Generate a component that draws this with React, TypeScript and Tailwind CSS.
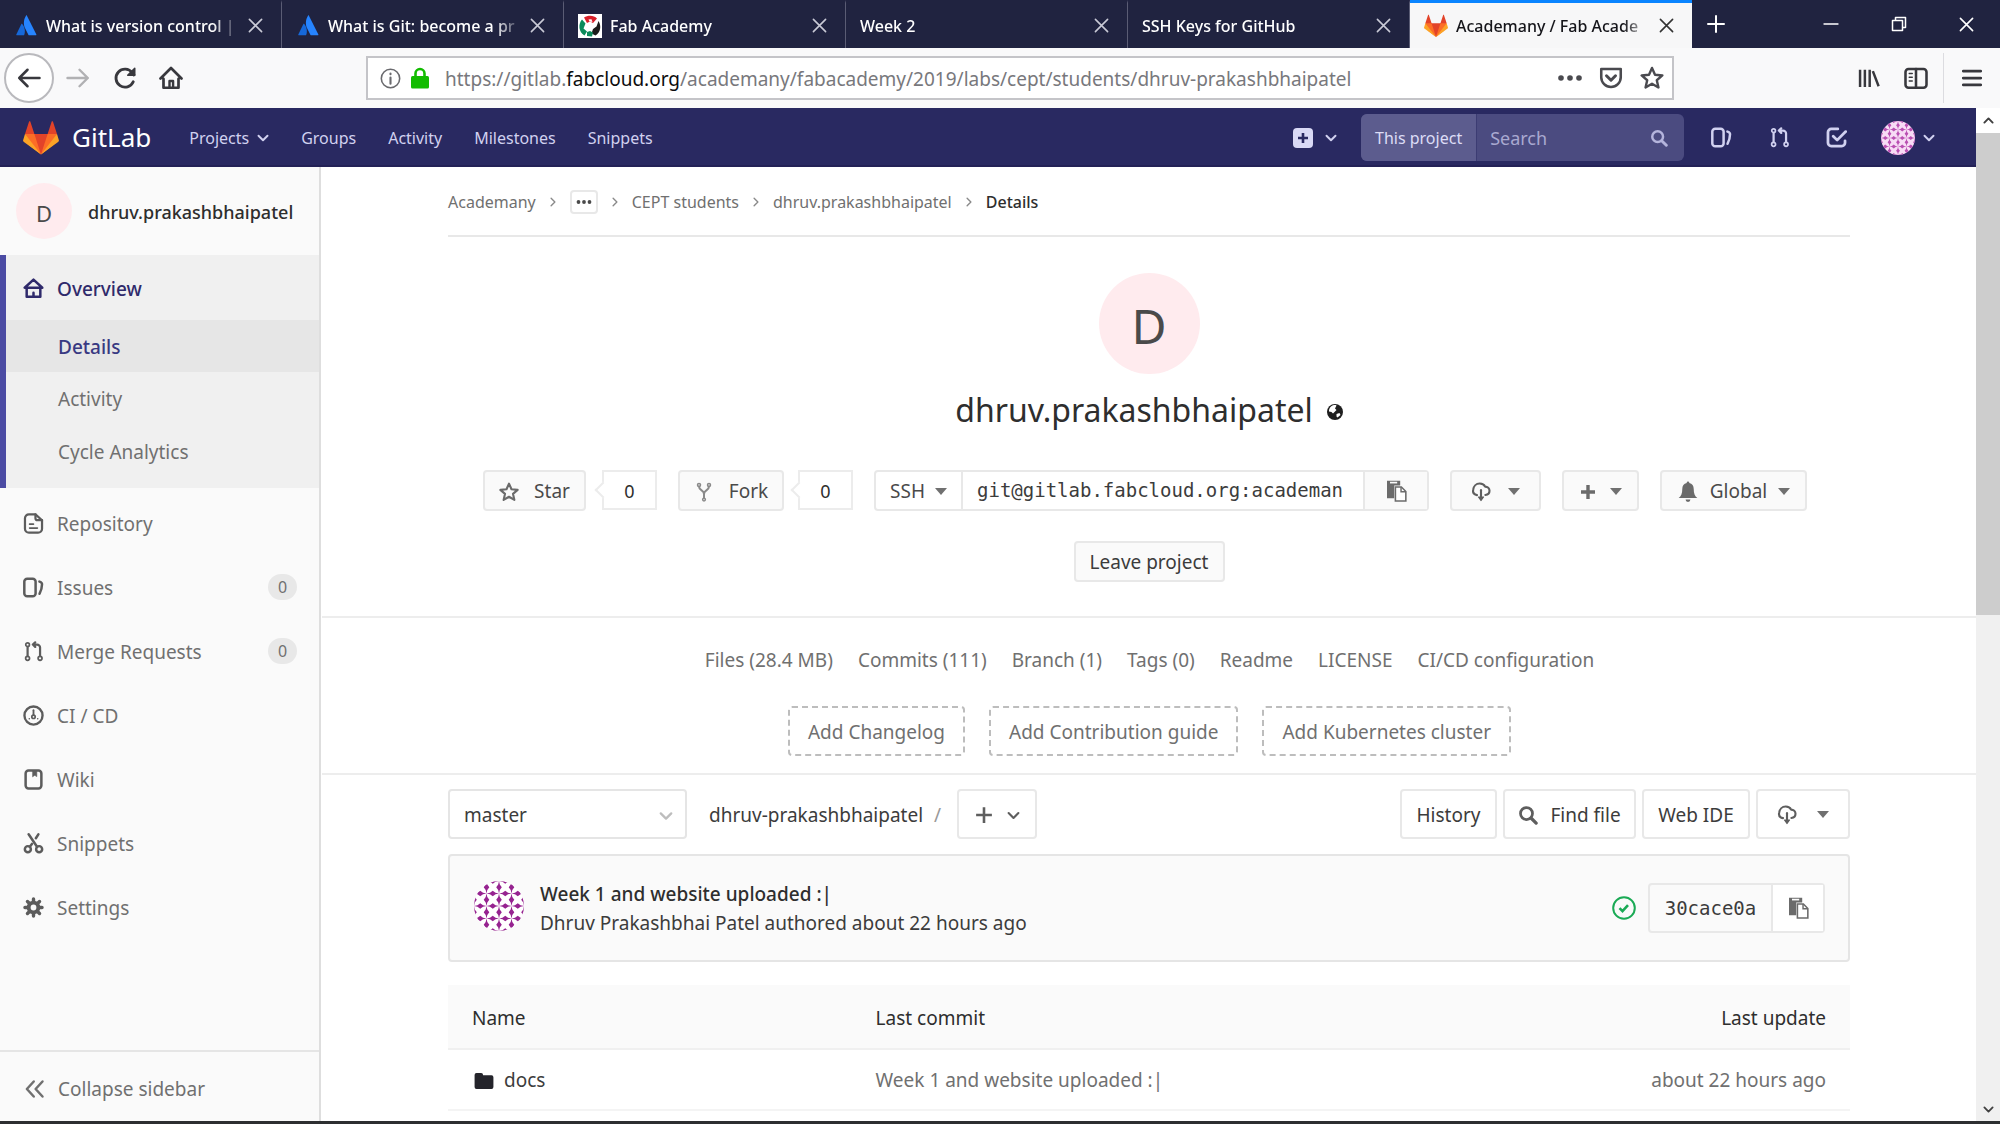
import React, { ReactNode } from "react";

/* ---------- icon base ---------- */

type IconProps = { className?: string };

function Stroke({ className = "size-5", width = 2, children }: IconProps & { width?: number; children: ReactNode }) {
  return (
    <svg viewBox="0 0 16 16" className={"shrink-0 " + className} fill="none" stroke="currentColor" strokeWidth={width} strokeLinecap="round" strokeLinejoin="round" aria-hidden="true">
      {children}
    </svg>
  );
}

/* ---------- logos ---------- */

const Tanuki = ({ className = "size-9" }: IconProps) => (
  <svg viewBox="0 0 36 36" className={"shrink-0 " + className} aria-hidden="true">
    <path d="M2 14l9.38 9v-9l-4-12.28c-.205-.632-1.176-.632-1.38 0z" fill="#e24329" />
    <path d="M34 14l-9.38 9v-9l4-12.28c.205-.632 1.176-.632 1.38 0z" fill="#e24329" />
    <path d="M18 34.38L3 14h30z" fill="#e24329" />
    <path d="M18 34.38L11.38 14H2l4 11z" fill="#fc6d26" />
    <path d="M18 34.38L24.62 14H34l-4 11z" fill="#fc6d26" />
    <path d="M2 14L.1 20.16c-.18.565 0 1.2.5 1.56l17.42 12.66z" fill="#fca326" />
    <path d="M34 14l1.9 6.16c.18.565 0 1.2-.5 1.56L18 34.38z" fill="#fca326" />
  </svg>
);

const Atlassian = () => (
  <svg viewBox="0 0 20 20" className="size-[21px] shrink-0" aria-hidden="true">
    <path d="M6 8.6C5.700 8.200 5.200 8.300 5 8.700L.3 18.500c-.2.400.1.800.5.800h6.500c.2 0 .4-.1.500-.3C9.200 16 8.400 11.400 6 8.600z" fill="#1668d9" />
    <path d="M9.500.6c-2.600 4.200-2.400 8.800-.7 12.200l3.100 6.200c.1.200.3.300.5.300h6.500c.4 0 .7-.4.500-.8L10.400.6c-.2-.4-.7-.4-.9 0z" fill="#2684ff" />
  </svg>
);

const FabLogo = () => (
  <svg viewBox="0 0 24 24" className="size-6 shrink-0" aria-hidden="true">
    <rect width="24" height="24" fill="#fff" />
    <path d="M6 3.500C10 .8 16 1 19 4.500l-4 4.500-3-1.500-3 1.500z" fill="#d81f2a" />
    <path d="M10.500 5.500l3-.3 1 2.800-3-.5z" fill="#fff" />
    <path d="M4 5.500C0 10 .5 18 6.500 21.500l2.500-4-3.500-3 2-5z" fill="#0c8a5b" />
    <path d="M20.500 7c3.200 5 2 11.500-3 14.500l-4-2 1.500-4.500 3.500-2.500z" fill="#1b1b1b" />
    <path d="M9 10l3-1.500L15.500 10v3.500L12 15.500 9 13.500z" fill="#fff" />
    <path d="M9 18l3-1 3 1.500-1 4-5-.5z" fill="#0c8a5b" />
  </svg>
);

const NODES = [-12.5, 0, 12.5, 25, 37.5, 50];

function Identicon({ id, petal, ground, className }: { id: string; petal: string; ground: string; className: string }) {
  return (
    <svg viewBox="0 0 50 50" className={"shrink-0 " + className} role="img" aria-label="Dhruv Prakashbhai Patel">
      <clipPath id={id}>
        <circle cx="25" cy="25" r="25" />
      </clipPath>
      <g clipPath={"url(#" + id + ")"}>
        <rect width="50" height="50" fill={ground} />
        {NODES.flatMap((x) =>
          NODES.map((y) => (
            <path key={x + "," + y} fill={petal} d={`M${x} ${y}l3.500 -.8l2.750 -2l2.750 2l3.500 .8l-3.500 .8l-2.750 2l-2.750 -2zM${x} ${y}l-.8 3.500l-2 2.750l2 2.750l.8 3.500l.8 -3.500l2 -2.750l-2 -2.750z`} />
          ))
        )}
      </g>
    </svg>
  );
}

/* ---------- page icons ---------- */

const HomeIcon = (p: IconProps) => (
  <Stroke {...p} width={1.900}>
    <path d="M8 1.200L1.300 7.400h13.400z" />
    <path d="M2.800 7.800V14.200h10.400V7.800M8 11.300V14" />
  </Stroke>
);
const DocIcon = (p: IconProps) => (
  <Stroke {...p} width={1.700}>
    <path d="M9.500 1H4.500a3 3 0 0 0-3 3v8a3 3 0 0 0 3 3h7a3 3 0 0 0 3-3V5.500z" />
    <path d="M9.500 1v3a1.500 1.500 0 0 0 1.500 1.500h3.500" />
    <path d="M5 8.500h3M5 11.500h6" strokeWidth={1.200} />
  </Stroke>
);
const IssuesIcon = (p: IconProps) => (
  <Stroke {...p} width={1.900}>
    <rect x="1" y="1.300" width="8.600" height="13.400" rx="2.200" />
    <path d="M12.500 3.500c1.300.3 2 .9 2 2 0 2.300-.8 5-1.900 7.300" />
  </Stroke>
);
const MergeIcon = (p: IconProps) => (
  <Stroke {...p} width={1.700}>
    <circle cx="3.500" cy="2.800" r="1.400" strokeWidth={1.300} />
    <circle cx="3.500" cy="13.200" r="1.500" strokeWidth={1.300} />
    <circle cx="13" cy="13.200" r="1.500" strokeWidth={1.300} />
    <path d="M3.500 4.500v7M13 11.500V5a2.300 2.300 0 0 0-2.300-2.300H7.500M9.300 1L7.500 2.700l1.800 1.800" />
  </Stroke>
);
const GaugeIcon = (p: IconProps) => (
  <Stroke {...p} width={1.800}>
    <circle cx="8" cy="8" r="6.900" />
    <circle cx="8" cy="9" r="1.300" strokeWidth={1.300} />
    <path d="M8 4v3.500" strokeWidth={1.400} />
    <path d="M4.800 10.500h.01M11.200 10.500h.01" strokeWidth={1.200} />
  </Stroke>
);
const BookIcon = (p: IconProps) => (
  <Stroke {...p} width={1.900}>
    <rect x="2" y="1.200" width="12" height="13.600" rx="2.200" />
    <path d="M7.500 1.500h3v4.300L9 4.800l-1.500 1z" fill="currentColor" strokeWidth={0.500} />
  </Stroke>
);
const ScissorsIcon = (p: IconProps) => (
  <Stroke {...p} width={1.900}>
    <circle cx="3.700" cy="12.300" r="2.300" />
    <circle cx="12.300" cy="12.300" r="2.300" />
    <path d="M4.300 1l6.400 9.500M11.700 1L9.800 4M5.200 10.500l1.600-2.200" />
  </Stroke>
);
const GearIcon = (p: IconProps) => (
  <Stroke {...p} width={3}>
    <circle cx="8" cy="8" r="3.700" />
    <path strokeWidth={2.600} d="M8 1.500v2M8 12.500v2M1.500 8h2M12.500 8h2M3.400 3.400l1.400 1.400M11.200 11.200l1.400 1.400M3.400 12.600l1.400-1.400M11.200 4.800l1.400-1.400" />
  </Stroke>
);
const CollapseIcon = (p: IconProps) => (
  <Stroke {...p}>
    <path d="M7 2L1.500 8 7 14M14 2L8.500 8l5.500 6" />
  </Stroke>
);
const TodoIcon = (p: IconProps) => (
  <Stroke {...p} width={2.100}>
    <path d="M9 1.500H4A2.500 2.500 0 0 0 1.500 4v8A2.500 2.500 0 0 0 4 14.500h8a2.500 2.500 0 0 0 2.500-2.500v-1.500" />
    <path d="M5.500 7L8.500 10 15 3.500" />
  </Stroke>
);
const ChevronDown = ({ className = "size-3" }: IconProps) => (
  <Stroke className={className} width={2.600}>
    <path d="M2 5l6 6 6-6" />
  </Stroke>
);
const Caret = () => (
  <svg viewBox="0 0 12 8" className="h-2 w-3 shrink-0 text-[#707070]" aria-hidden="true">
    <path d="M0 0h12L6 7z" fill="currentColor" />
  </svg>
);
const SearchIcon = ({ className = "size-5" }: IconProps) => (
  <Stroke className={className} width={2.200}>
    <circle cx="6.800" cy="6.800" r="4.800" />
    <path d="M10.600 10.600L14.500 14.500" strokeWidth={2.600} />
  </Stroke>
);
const StarIcon = ({ className = "size-5", width = 1.700 }: IconProps & { width?: number }) => (
  <Stroke className={className} width={width}>
    <path d="M8 1.300l2 4.500 4.900.5-3.700 3.200 1.100 4.800L8 11.800l-4.300 2.500 1.100-4.800L1.100 6.300 6 5.800z" />
  </Stroke>
);
const ForkIcon = () => (
  <Stroke className="size-5 text-[#8a8a8a]" width={1.600}>
    <circle cx="4" cy="2.300" r="1.200" strokeWidth={1.200} />
    <circle cx="12" cy="2.300" r="1.200" strokeWidth={1.200} />
    <circle cx="8" cy="14" r="1.100" strokeWidth={1.200} />
    <path d="M4 3.600C4 7 8 6.500 8 9.500v3.200M12 3.600C12 7 8 6.500 8 9.500" />
  </Stroke>
);
const PasteIcon = () => (
  <svg viewBox="0 0 20 20" className="size-6 shrink-0 text-[#6b6b6b]" aria-hidden="true">
    <path d="M2.500 1.500h11v4H8.500V16h-6z" fill="currentColor" />
    <path d="M5 2.300h6v1.400H5z" fill="#fafafa" />
    <path d="M9.500 6.700h5l3.700 3.700v8h-8.700z" fill="#fff" stroke="currentColor" strokeWidth="1.300" />
    <path d="M14.200 6.700v4h4" fill="none" stroke="currentColor" strokeWidth="1.200" />
  </svg>
);
const DownloadIcon = () => (
  <Stroke className="size-5 text-[#5e5e5e]" width={1.700}>
    <path d="M4.800 10.500C2.500 10 1.300 8.300 1.700 6.300 2 3.500 4 1.200 7 1.200c2.300 0 3.600 1 4.300 2.500 2 0 3.500 1.500 3.500 3.300 0 1.900-1.300 3.200-3.300 3.400" />
    <path d="M8 6.500v6.500" />
    <path d="M6 12l2 2.800 2-2.800z" fill="currentColor" strokeWidth={1} />
  </Stroke>
);
const PlusIcon = ({ className = "size-5", width = 2.400 }: IconProps & { width?: number }) => (
  <Stroke className={className} width={width}>
    <path d="M8 1v14M1 8h14" strokeLinecap="butt" />
  </Stroke>
);
const BellIcon = () => (
  <svg viewBox="0 0 20 20" className="size-[22px] shrink-0 text-[#6b6b6b]" aria-hidden="true">
    <path d="M10 0.500c.7 0 1.200.5 1.200 1.300 2.600.6 4 2.600 4 5.400 0 4 1 6.300 3.300 8.300H1.500c2.300-2 3.300-4.300 3.300-8.300 0-2.800 1.400-4.800 4-5.400C8.800 1 9.300.5 10 .5zM7.800 16.800h4.400a2.200 2.200 0 0 1-4.400 0z" fill="currentColor" />
  </svg>
);
const GlobeIcon = () => (
  <svg viewBox="0 0 16 16" className="mt-1 size-4 shrink-0" aria-label="Public" role="img">
    <circle cx="8" cy="8" r="8" fill="#1f1f1f" />
    <path d="M4 2.500C6 1 8.500.8 9.500 1.500L8 4.500 9.500 6 6 9.500 4.500 8 2 7.500C1.800 5.500 2.600 3.600 4 2.500zM9.500 10l3-1 1 2L10.500 13.500 9.500 12.500z" fill="#fff" />
  </svg>
);
const FolderIcon = () => (
  <svg viewBox="0 0 20 17" className="h-4 w-5 shrink-0" aria-hidden="true">
    <path d="M2 0h5a2 2 0 0 1 2 2v.5h9a2 2 0 0 1 2 2V15a2 2 0 0 1-2 2H2a2 2 0 0 1-2-2V2a2 2 0 0 1 2-2z" fill="#24242b" />
  </svg>
);
const CloseIcon = ({ className = "size-4" }: IconProps) => (
  <Stroke className={className} width={1.700}>
    <path d="M1.500 1.500l13 13M14.500 1.500l-13 13" />
  </Stroke>
);

/* ---------- browser chrome ---------- */

const TABS: { title: string; icon?: ReactNode; active?: boolean }[] = [
  { title: "What is version control |", icon: <Atlassian /> },
  { title: "What is Git: become a pr", icon: <Atlassian /> },
  { title: "Fab Academy", icon: <FabLogo /> },
  { title: "Week 2" },
  { title: "SSH Keys for GitHub" },
  { title: "Academany / Fab Acade", icon: <Tanuki className="size-6" />, active: true },
];

function TabBar() {
  return (
    <div className="flex h-12 shrink-0 bg-[#202340] text-white">
      {TABS.map((t) => (
        <div
          key={t.title}
          className={
            "flex min-w-0 basis-[282px] items-center border-t-[3px] pl-[14px] pr-[18px] " +
            (t.active ? "border-t-[#0a84ff] bg-[#f7f7f8] text-[#15151a]" : "border-r border-r-[#5a5c74] border-t-[#202340]")
          }
        >
          {t.icon && <span className="mr-2 flex w-6 justify-center">{t.icon}</span>}
          <a href="#tab" className="min-w-0 flex-1 whitespace-nowrap text-base font-medium [mask-image:linear-gradient(to_right,black_86%,transparent)]">
            {t.title}
          </a>
          <button aria-label="Close tab" className={"ml-2 " + (t.active ? "text-[#333]" : "text-[#c9cad6]")}>
            <CloseIcon className="size-[15px]" />
          </button>
        </div>
      ))}
      <button aria-label="New tab" className="flex w-12 items-center justify-center pb-px">
        <PlusIcon width={1.600} />
      </button>
      <div className="flex-1" />
      <div className="flex w-[202px] items-center justify-between pl-[25px] pr-[26px]">
        <button aria-label="Minimize">
          <Stroke className="size-4" width={1.300}><path d="M1 8h14" /></Stroke>
        </button>
        <button aria-label="Restore">
          <Stroke className="size-4" width={1.500}><path d="M1.500 4.500h10v10h-10zM4.500 4.500v-3h10v10h-3" /></Stroke>
        </button>
        <button aria-label="Close window">
          <CloseIcon className="size-[15px]" />
        </button>
      </div>
    </div>
  );
}

function Toolbar() {
  return (
    <div className="flex h-[60px] shrink-0 items-center bg-[#f9f9fa] pl-1 text-[#38383d]">
      <button aria-label="Back" className="flex size-[50px] items-center justify-center rounded-full border-2 border-[#b9b9bd] bg-white">
        <Stroke className="size-6" width={1.700}><path d="M15 8H1.500M7 2.500L1.500 8 7 13.500" /></Stroke>
      </button>
      <button aria-label="Forward" className="ml-3 text-[#b1b1b3]">
        <Stroke className="size-6" width={1.600}><path d="M1 8h13.500M9 2.500L14.500 8 9 13.500" /></Stroke>
      </button>
      <button aria-label="Reload" className="ml-[23px]">
        <Stroke className="size-6" width={1.900}><path d="M13.500 10.500A6 6 0 1 1 12.800 4.500L14 6" /><path d="M14.500 1.500V6.200H9.800z" fill="currentColor" strokeWidth={1} /></Stroke>
      </button>
      <button aria-label="Home" className="ml-[22px]">
        <Stroke className="size-6" width={1.800}><path d="M1 8.300L8 1.300l7 7M3 8.500V14.500h10V8.500" /><path d="M7 14v-4h2.400v4" strokeWidth={1.600} /></Stroke>
      </button>
      <div className="ml-[183px] flex h-[44px] flex-1 items-center border-2 border-[#c4c4c8] bg-white pl-3 pr-2">
        <Stroke className="size-[21px] text-[#6a6a6e]" width={1.200}><circle cx="8" cy="8" r="7" /><path d="M8 7.300V12M8 4.200v.6" strokeWidth={1.600} /></Stroke>
        <svg viewBox="0 0 18 22" className="ml-[10px] h-[22px] w-[18px] shrink-0" aria-label="Secure" role="img">
          <path d="M4.500 10V6.500a4.500 4.500 0 0 1 9 0V10" fill="none" stroke="#12bc00" strokeWidth="2.600" />
          <rect y="9" width="18" height="12.500" rx="1.500" fill="#12bc00" />
        </svg>
        <div role="textbox" aria-label="Address" tabIndex={0} className="ml-4 flex-1 whitespace-nowrap pt-[2px] text-[19px] leading-6 text-[#78787c]">
          https://gitlab.<span className="text-[#0c0c0d]">fabcloud.org</span>/academany/fabacademy/2019/labs/cept/students/dhruv-prakashbhaipatel
        </div>
        <button aria-label="Page actions">
          <svg viewBox="0 0 24 6" className="h-[6px] w-6" fill="#4a4a4f" aria-hidden="true"><circle cx="3" cy="3" r="2.800" /><circle cx="12" cy="3" r="2.800" /><circle cx="21" cy="3" r="2.800" /></svg>
        </button>
        <button aria-label="Save to Pocket" className="ml-[17px] text-[#4a4a4f]">
          <Stroke className="size-6" width={1.700}><path d="M1.500 2h13v5.500a6.500 6.500 0 0 1-13 0z" /><path d="M5 6.500l3 3 3-3" strokeWidth={2} /></Stroke>
        </button>
        <button aria-label="Bookmark" className="ml-[17px] text-[#4a4a4f]">
          <StarIcon className="size-6" width={1.600} />
        </button>
      </div>
      <button aria-label="Library" className="ml-[184px]">
        <Stroke className="size-[22px]" width={1.800}><path d="M1.500 2v12.500M5 2v12.500M8.500 2v12.500M10.800 3L15 14" strokeLinecap="butt" /></Stroke>
      </button>
      <button aria-label="Sidebars" className="ml-6">
        <Stroke className="size-6" width={1.700}><rect x="1" y="2" width="14" height="12.500" rx="2" /><path d="M8 2v12.500" /><path d="M3.500 5h2M3.500 7.500h2M3.500 10h2" strokeWidth={1} /></Stroke>
      </button>
      <div className="ml-[15px] h-[50px] w-px bg-[#dcdce0]" />
      <button aria-label="Menu" className="mx-[18px]">
        <Stroke className="size-5" width={2.200}><path d="M1 2.500h14M1 8h14M1 13.500h14" /></Stroke>
      </button>
    </div>
  );
}

/* ---------- GitLab navigation ---------- */

function NavBar() {
  return (
    <nav className="flex h-[59px] shrink-0 items-center border-b-2 border-[#232156] bg-[#292961] pl-[23px] pr-[41px] pt-[2px] text-base text-[#d1d1f0]">
      <a href="#home" className="flex items-center">
        <Tanuki />
        <span className="ml-[13px] text-[26px] text-white">GitLab</span>
      </a>
      <a href="#projects" className="ml-[38px] flex items-center gap-2">Projects <ChevronDown /></a>
      <a href="#groups" className="ml-8">Groups</a>
      <a href="#activity" className="ml-8">Activity</a>
      <a href="#milestones" className="ml-8">Milestones</a>
      <a href="#snippets" className="ml-8">Snippets</a>
      <div className="flex-1" />
      <button aria-label="New" className="mr-6 flex items-center gap-3">
        <svg viewBox="0 0 20 20" className="size-5" aria-hidden="true"><rect width="20" height="20" rx="4" fill="#d9d9f5" /><path d="M10 5v10M5 10h10" stroke="#292961" strokeWidth="2.600" /></svg>
        <ChevronDown />
      </button>
      <div className="flex h-[47px] w-[323px] items-center rounded-md bg-[#4b4b80]">
        <button className="h-full rounded-l-md border-r border-[#3c3c73] bg-[#5c5c8e] px-[14px] text-[#dcdcf6]">This project</button>
        <input aria-label="Search" placeholder="Search" className="min-w-0 flex-1 bg-transparent pl-[13px] text-lg outline-none placeholder:text-[#a9a9d0]" />
        <span className="mr-4 text-[#b4b4dc]"><SearchIcon className="size-[18px]" /></span>
      </div>
      <a href="#issues" aria-label="Issues" className="ml-[27px]"><IssuesIcon className="size-[21px]" /></a>
      <a href="#mrs" aria-label="Merge requests" className="ml-[37px]"><MergeIcon className="size-[21px]" /></a>
      <a href="#todos" aria-label="Todos" className="ml-[36px]"><TodoIcon className="size-[21px]" /></a>
      <button aria-label="Account" className="ml-[34px] flex items-center gap-2">
        <Identicon id="nav-avatar" petal="#b94fb2" ground="#f7dcf5" className="size-[34px]" />
        <ChevronDown />
      </button>
    </nav>
  );
}

const SUB_ITEMS = ["Activity", "Cycle Analytics"];
const SIDE_ITEMS: { label: string; icon: ReactNode; count?: number }[] = [
  { label: "Repository", icon: <DocIcon className="size-[21px]" /> },
  { label: "Issues", icon: <IssuesIcon className="size-[21px]" />, count: 0 },
  { label: "Merge Requests", icon: <MergeIcon className="size-[21px]" />, count: 0 },
  { label: "CI / CD", icon: <GaugeIcon className="size-[21px]" /> },
  { label: "Wiki", icon: <BookIcon className="size-[21px]" /> },
  { label: "Snippets", icon: <ScissorsIcon className="size-[21px]" /> },
  { label: "Settings", icon: <GearIcon className="size-[21px]" /> },
];

function Sidebar() {
  return (
    <aside className="flex w-[321px] shrink-0 flex-col border-r-2 border-[#dedede] bg-[#fafafa] text-[19px] text-[#707070]">
      <a href="#project" className="flex h-[88px] shrink-0 items-center pl-4 text-[#2e2e2e]">
        <span className="flex size-14 items-center justify-center rounded-full bg-[#ffebee] pt-1 text-[22px] text-[#4a4a4a]">D</span>
        <span className="ml-4 pt-[2px] text-lg font-medium">dhruv.prakashbhaipatel</span>
      </a>
      <div className="flex shrink-0 flex-col border-l-[6px] border-[#4b4ba3] bg-[#f0f0f0] pb-[10px]">
        <a href="#overview" className="flex h-[65px] items-center pl-[17px] pt-[2px] font-medium text-[#2f2a6b]">
          <HomeIcon className="size-[21px]" />
          <span className="ml-[13px] pt-[2px]">Overview</span>
        </a>
        <a href="#details" className="flex h-[52px] items-center bg-[#e6e6e6] pl-[52px] pt-[2px] font-medium text-[#393982]">Details</a>
        {SUB_ITEMS.map((s) => (
          <a key={s} href="#sub" className="flex h-[53px] items-center pl-[52px] pt-[2px]">{s}</a>
        ))}
      </div>
      <div className="flex shrink-0 flex-col pt-[3px]">
        {SIDE_ITEMS.map((s) => (
          <a key={s.label} href="#item" className="flex h-16 items-center pl-[23px] pr-[22px]">
            <span className="text-[#5c5c5c]">{s.icon}</span>
            <span className="ml-[13px] flex-1 pt-[2px]">{s.label}</span>
            {s.count !== undefined && <span className="flex h-[26px] w-[29px] items-center justify-center rounded-full bg-[#e8e8e8] text-base">{s.count}</span>}
          </a>
        ))}
      </div>
      <div className="flex-1" />
      <button className="flex h-[71px] shrink-0 items-center border-t-2 border-[#e5e5e5] pl-[25px] pt-1">
        <CollapseIcon className="size-5" />
        <span className="ml-[13px] pt-[2px]">Collapse sidebar</span>
      </button>
    </aside>
  );
}

/* ---------- project page ---------- */

const BTN = "flex shrink-0 items-center justify-center rounded-[4px] border-2 border-[#e8e8e8] pt-[2px] ";

const Sep = () => (
  <Stroke className="size-[10px] text-[#8a8a8a]" width={2.200}><path d="M5 2l6 6-6 6" /></Stroke>
);

function Breadcrumb() {
  return (
    <div className="flex h-[70px] items-center gap-3 border-b-2 border-[#e8e8e8] pt-[2px] text-base text-[#707070]">
      <a href="#academany">Academany</a>
      <Sep />
      <button aria-label="More" className="flex h-6 w-7 items-center justify-center rounded-[4px] border-2 border-[#e8e8e8]">
        <svg viewBox="0 0 16 4" className="h-1 w-4" fill="#4a4a4a" aria-hidden="true"><circle cx="2.500" cy="2" r="1.900" /><circle cx="8" cy="2" r="1.900" /><circle cx="13.500" cy="2" r="1.900" /></svg>
      </button>
      <Sep />
      <a href="#cept">CEPT students</a>
      <Sep />
      <a href="#dhruv">dhruv.prakashbhaipatel</a>
      <Sep />
      <a href="#details" className="font-medium text-[#2e2e2e]">Details</a>
    </div>
  );
}

function Count({ value }: { value: number }) {
  return (
    <span className="relative flex h-10 w-[55px] items-center justify-center border-2 border-[#ececec] bg-white pt-[2px] text-[18px] text-[#2e2e2e]">
      <span className="absolute -left-[7px] top-3 size-3 rotate-45 border-b-2 border-l-2 border-[#ececec] bg-white" />
      {value}
    </span>
  );
}

function ProjectHeader() {
  return (
    <section className="flex flex-col items-center border-b-2 border-[#ededed] pb-[34px] pt-9">
      <div className="flex size-[101px] items-center justify-center rounded-full bg-[#ffebee] pt-1 text-5xl text-[#4a4a4a]">D</div>
      <h1 className="mt-4 flex items-center gap-[14px] text-[32px] leading-10 text-[#2e2e2e]">
        dhruv.prakashbhaipatel
        <GlobeIcon />
      </h1>
      <div className="mt-10 flex gap-[21px] pr-2 text-[19px] text-[#4a4a4a]">
        <div className="flex gap-4">
          <button className={BTN + "h-[41px] w-[103px] gap-[15px] bg-[#fafafa]"}><StarIcon className="size-5 text-[#6b6b6b]" />Star</button>
          <Count value={0} />
        </div>
        <div className="flex gap-[14px]">
          <button className={BTN + "h-[41px] w-[106px] gap-[15px] bg-[#fafafa]"}><ForkIcon />Fork</button>
          <Count value={0} />
        </div>
        <div className="flex h-[41px] rounded-[4px] border-2 border-[#e8e8e8]">
          <button className="flex w-[87px] items-center justify-center gap-[10px] border-r-2 border-[#e8e8e8] pt-[2px]">SSH <Caret /></button>
          <input aria-label="Clone URL" readOnly defaultValue="git@gitlab.fabcloud.org:academan" className="w-[400px] px-[14px] font-[DejaVu_Sans_Mono,monospace] text-[19px] text-[#3c3c3c] outline-none" />
          <button aria-label="Copy URL" className="flex w-[64px] items-center justify-center border-l-2 border-[#e8e8e8] bg-[#fafafa]"><PasteIcon /></button>
        </div>
        <button aria-label="Download" className={BTN + "h-[41px] w-[91px] gap-[17px] bg-[#fafafa]"}><DownloadIcon /><Caret /></button>
        <button aria-label="Add" className={BTN + "h-[41px] w-[77px] gap-[14px] bg-[#fafafa] text-[#6b6b6b]"}><PlusIcon width={3.400} className="size-4" /><Caret /></button>
        <button className={BTN + "h-[41px] w-[147px] gap-[11px] bg-[#fafafa]"}><BellIcon />Global <Caret /></button>
      </div>
      <button className={BTN + "mt-[30px] h-[41px] w-[151px] bg-[#fafafa] text-[19px] text-[#3c3c3c]"}>Leave project</button>
    </section>
  );
}

const STATS = ["Files (28.4 MB)", "Commits (111)", "Branch (1)", "Tags (0)", "Readme", "LICENSE", "CI/CD configuration"];
const ADDS = ["Add Changelog", "Add Contribution guide", "Add Kubernetes cluster"];

function Stats() {
  return (
    <section className="flex flex-col items-center border-b-2 border-[#ededed] pb-[17px] pl-px pt-[28px] text-[19px] leading-7 text-[#707070]">
      <div className="flex gap-[25px]">
        {STATS.map((s) => <a key={s} href="#stat">{s}</a>)}
      </div>
      <div className="mt-8 flex gap-6">
        {ADDS.map((s) => <button key={s} className="h-[50px] rounded-[4px] border-2 border-dashed border-[#bdbdbd] px-[18px] pt-px">{s}</button>)}
      </div>
    </section>
  );
}

function Files() {
  return (
    <section className="pt-[14px] text-[19px] text-[#3c3c3c]">
      <div className="flex items-center">
        <div className="relative">
          <select aria-label="Branch" defaultValue="master" className="h-[50px] w-[239px] appearance-none rounded-[4px] border-2 border-[#e5e5e5] bg-white pl-[14px] pt-[2px]">
            <option>master</option>
          </select>
          <span className="pointer-events-none absolute right-[14px] top-[20px] text-[#bdbdbd]"><ChevronDown className="size-[14px]" /></span>
        </div>
        <a href="#root" className="ml-[22px] pt-[2px]">dhruv-prakashbhaipatel</a>
        <span className="ml-[11px] pt-[2px] text-[#999]">/</span>
        <button aria-label="Add to tree" className={BTN + "ml-4 h-[50px] w-[80px] gap-[14px] text-[#5e5e5e]"}>
          <PlusIcon className="size-[18px]" width={2.300} />
          <ChevronDown className="size-[13px]" />
        </button>
        <div className="ml-auto flex gap-[6px]">
          <button className={BTN + "h-[50px] w-[97px]"}>History</button>
          <button className={BTN + "h-[50px] w-[133px] gap-3"}><span className="text-[#5e5e5e]"><SearchIcon /></span>Find file</button>
          <button className={BTN + "h-[50px] w-[108px]"}>Web IDE</button>
          <button aria-label="Download" className={BTN + "h-[50px] w-[94px] gap-5"}><DownloadIcon /><Caret /></button>
        </div>
      </div>
      <div className="mt-[15px] flex h-[108px] items-center rounded-[4px] border-2 border-[#e5e5e5] bg-[#fafafa] pl-6 pr-[23px]">
        <Identicon id="commit-avatar" petal="#962390" ground="#fff" className="mb-1 size-[50px]" />
        <div className="ml-4 pt-px leading-[29px]">
          <a href="#commit" className="block font-medium text-[#2e2e2e]">Week 1 and website uploaded :|</a>
          <p>Dhruv Prakashbhai Patel authored about 22 hours ago</p>
        </div>
        <svg viewBox="0 0 24 24" className="ml-auto size-6" fill="none" stroke="#1aaa55" aria-label="Passed" role="img">
          <circle cx="12" cy="12" r="10.800" strokeWidth="2" />
          <path d="M7.500 12.200l3 3 5.500-6" strokeWidth="2.600" />
        </svg>
        <div className="ml-3 flex h-[50px] rounded-[4px] border-2 border-[#e8e8e8]">
          <a href="#sha" className="flex w-[123px] items-center justify-center border-r-2 border-[#e8e8e8] font-[DejaVu_Sans_Mono,monospace]">30cace0a</a>
          <button aria-label="Copy SHA" className="flex w-[50px] items-center justify-center bg-white"><PasteIcon /></button>
        </div>
      </div>
      <table className="mt-[23px] w-full table-fixed border-collapse text-left">
        <thead>
          <tr className="h-[64px] border-b-2 border-[#f0f0f0] bg-[#fafafa] text-[#2e2e2e]">
            <th className="w-[29%] pl-6 pt-1 font-normal">Name</th>
            <th className="pl-[21px] pt-1 font-normal">Last commit</th>
            <th className="w-[25%] pr-6 pt-1 text-right font-normal">Last update</th>
          </tr>
        </thead>
        <tbody>
          <tr className="h-[61px] border-b-2 border-[#f4f4f4] text-[#707070]">
            <td className="pl-[26px] pt-[2px]"><a href="#docs" className="flex items-center gap-[10px] text-[#3c3c3c]"><FolderIcon />docs</a></td>
            <td className="pl-[21px] pt-[2px]">Week 1 and website uploaded :|</td>
            <td className="pr-6 pt-[2px] text-right">about 22 hours ago</td>
          </tr>
        </tbody>
      </table>
    </section>
  );
}

function Scrollbar() {
  return (
    <div className="flex w-6 shrink-0 flex-col bg-[#f0f0f0] text-[#404040]">
      <div className="flex h-[25px] items-center justify-center bg-white"><Stroke className="size-[11px]" width={2.800}><path d="M2 11l6-6 6 6" /></Stroke></div>
      <div className="flex-1"><div className="h-1/2 bg-[#cdcdcd]" /></div>
      <div className="flex h-6 items-center justify-center"><ChevronDown className="size-[11px]" /></div>
    </div>
  );
}

export default function App() {
  return (
    <div className="flex h-screen flex-col overflow-hidden border-b-[3px] border-[#2d2f31] bg-white font-[Noto_Sans,Open_Sans,sans-serif]">
      <TabBar />
      <Toolbar />
      <div className="flex min-h-0 flex-1">
        <div className="flex min-w-0 flex-1 flex-col">
          <NavBar />
          <div className="flex min-h-0 flex-1">
            <Sidebar />
            <main className="min-w-0 flex-1 overflow-hidden pl-px">
              <div className="px-[126px]"><Breadcrumb /></div>
              <ProjectHeader />
              <Stats />
              <div className="px-[126px]"><Files /></div>
            </main>
          </div>
        </div>
        <Scrollbar />
      </div>
    </div>
  );
}
